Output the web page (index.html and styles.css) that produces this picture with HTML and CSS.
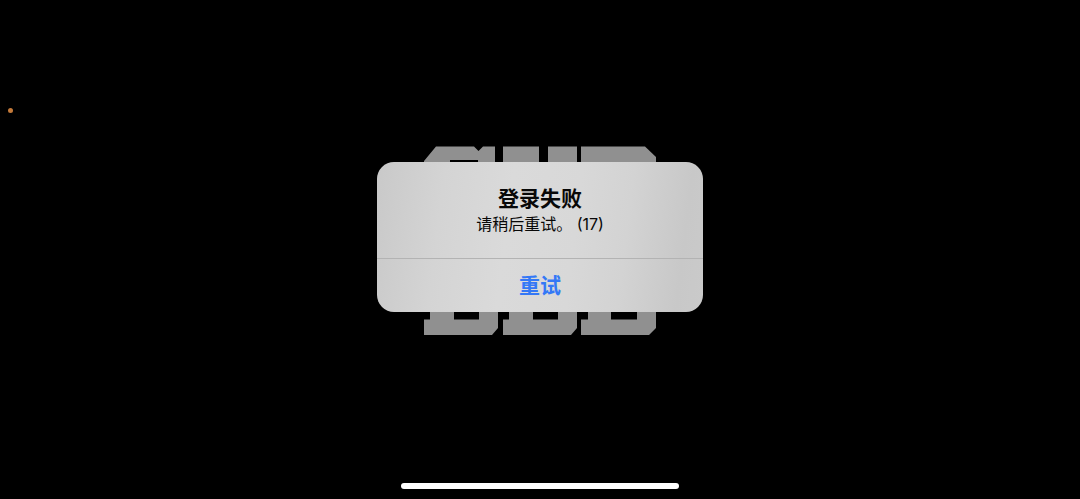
FILE: index.html
```html
<!DOCTYPE html>
<html lang="zh-CN">
<head>
    <meta charset="UTF-8">
    <meta name="viewport" content="width=device-width, initial-scale=1.0">
    <title>登录失败</title>
    <link rel="stylesheet" href="styles.css">
</head>
<body>
    <span class="status-dot"></span>

    <main class="stage">
        <svg class="logo" viewBox="0 0 232 189" aria-hidden="true">
            <path d="M0 15 12 0.5H50L54.500 5 59 0.500H71V40H54V14H26V70H0Z"/>
            <path d="M79 0.500H115V70H79ZM124 0.500H153V70H124Z"/>
            <path d="M157 0.500H221L232 11V70H157Z"/>
            <path d="M6 90H74V182L68 189H0V173.500H6ZM30 110V173.500H55V110Z"/>
            <path d="M85 90H153V182L147 189H79V173.500H85ZM109 110V173.500H134V110Z"/>
            <path d="M164 90H232V182L225 189H157V173.500H164ZM187 110V173.500H213V110Z"/>
        </svg>

        <div class="alert" role="alertdialog" aria-labelledby="alertTitle" aria-describedby="alertMessage">
            <div class="alert-body">
                <h1 id="alertTitle">登录失败</h1>
                <p id="alertMessage">请稍后重试。 (17)</p>
            </div>
            <button type="button">重试</button>
        </div>
    </main>

    <footer class="home">
        <div class="home-bar"></div>
    </footer>
</body>
</html>
```
FILE: styles.css
```css
body, h1, p, button {
    margin: 0;
    padding: 0;
    font-family: Inter, "Noto Sans CJK SC", sans-serif;
}

body {
    display: flex;
    flex-direction: column;
    min-height: 100vh;
    background-color: #000;
    color: #080808;
}

.status-dot {
    position: absolute;
    top: 108px;
    left: 8px;
    width: 5px;
    height: 5px;
    border-radius: 50%;
    background-color: #c47a3a;
}

.stage {
    position: relative;
    flex: 1;
    display: flex;
    justify-content: center;
    align-items: center;
}

/* Logo fica atrás do alerta */
.logo {
    position: absolute;
    top: calc(50% - 91px);
    left: calc(50% - 116px);
    width: 232px;
    height: 189px;
    fill: #909090;
    fill-rule: evenodd;
}

.alert {
    position: relative;
    width: 326px;
    border-radius: 17px;
    overflow: hidden;
    background: linear-gradient(97deg, #c9c9c9 0%, #d4d4d4 20%, #dadada 40%, #d8d8d8 60%, #d3d3d3 75%, #c8c8c8 92%, #cacaca 100%);
    text-align: center;
}

.alert-body {
    padding: 23px 16px;
}

.alert h1 {
    font-size: 21px;
    line-height: 28px;
    font-weight: 600;
}

.alert p {
    font-size: 16px;
    line-height: 22px;
}

.alert button {
    display: block;
    width: 100%;
    height: 54px;
    padding-bottom: 4px;
    border: none;
    border-top: 1px solid #b3b3b3;
    background: none;
    color: #3478f6;
    font-size: 21px;
    font-weight: 600;
    cursor: pointer;
}

.home {
    display: flex;
    justify-content: center;
    padding: 9px 0 10px;
}

.home-bar {
    width: 278px;
    height: 6px;
    border-radius: 3px;
    background-color: #fff;
}
```
